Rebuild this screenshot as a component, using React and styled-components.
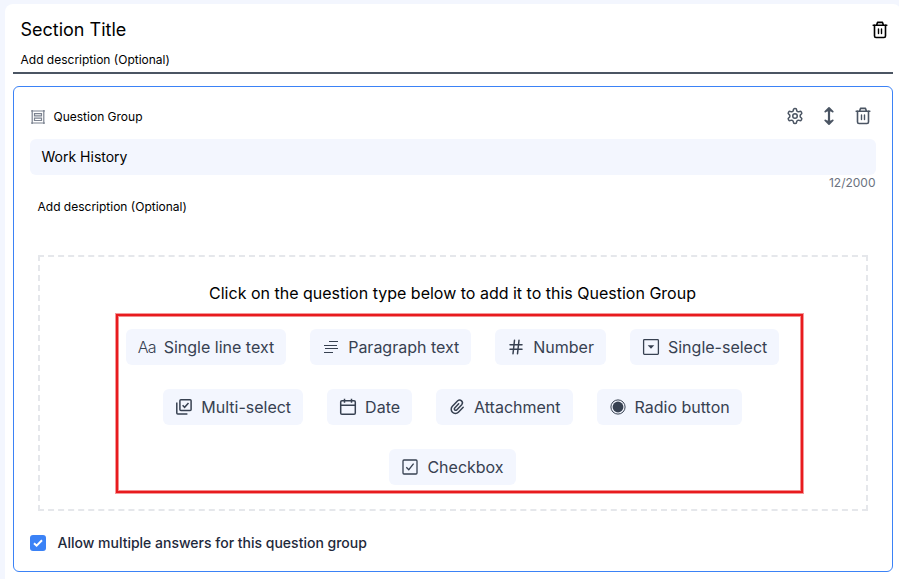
import React from "react";
import styled, { createGlobalStyle } from "styled-components";
import { LuHash, LuSettings } from "react-icons/lu";

const GlobalStyle = createGlobalStyle`
  * {
    box-sizing: border-box;
  }
  body {
    margin: 0;
    background: #f3f6fe;
    font-family: Inter, "Liberation Sans", sans-serif;
    color: #000;
    overflow: hidden;
  }
  svg {
    display: block;
    flex: none;
  }
`;

const Page = styled.div`
  width: 899px;
  height: 579px;
  padding: 4px 0 0 5px;
  overflow: hidden;
`;

const Section = styled.section`
  width: 896px;
  height: 600px;
  padding: 0 8px;
  background: #fff;
  border-radius: 8px;
`;

const SectionHeader = styled.header`
  display: flex;
  justify-content: space-between;
  height: 70px;
  padding: 15px 4px 0 7.5px;
  border-bottom: 2px solid #4b5563;
`;

const SectionTitle = styled.div`
  font-size: 18px;
  line-height: 22px;
`;

const Description = styled.div`
  font-size: 12px;
  line-height: 16px;
  margin-top: ${(props) => props.$top}px;
  padding-left: ${(props) => props.$indent || 0}px;
`;

const IconButton = styled.button`
  display: flex;
  align-items: center;
  justify-content: center;
  width: 18px;
  height: 22px;
  padding: 0;
  border: 0;
  background: none;
  color: ${(props) => props.$color || "#4b5563"};
  cursor: pointer;
`;

const GroupCard = styled.div`
  height: 486px;
  margin-top: 12px;
  padding: 18px 16px 0;
  border: 1px solid #3b82f6;
  border-radius: 6px;
`;

const GroupHeader = styled.div`
  display: flex;
  align-items: flex-start;
  justify-content: space-between;
  height: 23px;
  padding-right: 4px;
`;

const GroupLabel = styled.div`
  display: flex;
  align-items: center;
  gap: 7.5px;
  height: 23px;
  font-size: 12px;
`;

const Actions = styled.div`
  display: flex;
  gap: 16px;
`;

const TitleInput = styled.div`
  height: 36px;
  margin-top: 11px;
  padding: 0 11.5px;
  background: #f3f6fe;
  border-radius: 6px;
  font-size: 14px;
  line-height: 36px;
`;

const Counter = styled.div`
  height: 16px;
  padding-right: 0.5px;
  font-size: 12px;
  line-height: 16px;
  text-align: right;
  color: #6b7280;
`;

const DropZone = styled.div`
  position: relative;
  height: 256px;
  margin: 40px 8px 0;
  padding-top: 24px;
  border: 2px dashed #e5e7eb;
`;

const Hint = styled.div`
  height: 24px;
  padding-right: 1px;
  font-size: 16px;
  line-height: 24px;
  text-align: center;
`;

const Highlight = styled.div`
  position: absolute;
  top: 57px;
  left: 76px;
  width: 687px;
  height: 179px;
  border: 2px solid #e81b1e;
  box-shadow: 0 0 0 1px rgba(232, 27, 30, 0.45), inset 0 0 0 1px rgba(232, 27, 30, 0.5);
  pointer-events: none;
`;

const Rows = styled.div`
  display: flex;
  flex-direction: column;
  gap: 24px;
  margin-top: 24px;
  padding-right: 1px;
`;

const Row = styled.div`
  display: flex;
  justify-content: center;
  gap: 24px;
`;

const Chip = styled.button`
  display: flex;
  align-items: center;
  gap: 8px;
  height: 36px;
  padding: 0 12px;
  border: 0;
  border-radius: 6px;
  background: #f3f6fe;
  color: #374151;
  font-family: inherit;
  font-size: 16px;
  white-space: nowrap;
  cursor: pointer;
`;

const TextGlyph = styled.span`
  width: 18px;
  font-size: 16px;
  font-weight: 300;
  letter-spacing: -0.7px;
`;

const MultipleAnswers = styled.label`
  display: flex;
  align-items: center;
  gap: 11.5px;
  height: 20px;
  margin-top: 22px;
  font-size: 14px;
  font-weight: 500;
  line-height: 18px;
  color: #1e293b;
`;

const AnswersText = styled.span`
  padding-bottom: 1px;
`;

const CheckMark = styled.span`
  display: flex;
  align-items: center;
  justify-content: center;
  width: 16px;
  height: 16px;
  border-radius: 3px;
  background: #3b82f6;
`;

const Svg = ({ size = 18, children }) => (
  <svg
    width={size}
    height={size}
    viewBox={`0 0 ${size} ${size}`}
    fill="none"
    stroke="currentColor"
    strokeWidth="1.3"
  >
    {children}
  </svg>
);

const TrashIcon = () => (
  <svg width="18" height="18" viewBox="0 0 18 18" fill="none" stroke="currentColor" strokeWidth="1.6" strokeLinecap="round" strokeLinejoin="round">
    <path d="M2.2 4.2h13.6M5.6 4l.9-2.6h5l.9 2.6" />
    <path d="M3.5 4.4v10.6q0 1.5 1.5 1.5h8q1.5 0 1.5-1.5V4.4" />
    <path d="M7.5 8v4.5M10.5 8v4.5" strokeWidth="1.4" />
  </svg>
);

const MoveIcon = () => (
  <svg width="18" height="18" viewBox="0 0 18 18" fill="none" stroke="currentColor" strokeLinecap="round" strokeLinejoin="round">
    <path d="M9 2v14" strokeWidth="2.2" />
    <path d="M5.3 4.6L9 1l3.7 3.6M5.3 13.4L9 17l3.7-3.6" fill="currentColor" strokeWidth="1.8" />
  </svg>
);

const GroupIcon = () => (
  <svg width="16" height="16" viewBox="0 0 16 16" fill="none" stroke="#7b828f" strokeWidth="1.2">
    <path d="M2.2 1v14M13.8 1v14M1 2h14M1 14h14" />
    <path d="M4.5 4.6h7v2.3h-7zM4.5 9.2h7v2.3h-7z" />
  </svg>
);

const ParagraphIcon = () => (
  <Svg>
    <path d="M7 3.5h9M2 7.5h13" strokeWidth="1" />
    <path d="M3 10.5h13M2 14.5h9" strokeWidth="1" />
  </Svg>
);

const SelectIcon = () => (
  <Svg>
    <rect x="1.6" y="1.6" width="14.8" height="14.8" rx="0.8" />
    <path d="M5.7 7.2h6.6L9 10.8z" fill="currentColor" stroke="none" />
  </Svg>
);

const MultiSelectIcon = () => (
  <Svg>
    <rect x="4.9" y="1.7" width="11.2" height="10.8" rx="1" strokeWidth="1.5" />
    <path d="M1.8 4.6v10.3q0 1 1 1h9.6" strokeWidth="1.5" />
    <path d="M7.6 7.2l2 2.1 3.9-4.4" strokeWidth="1.5" />
  </Svg>
);

const DateIcon = () => (
  <Svg>
    <rect x="1.7" y="2.7" width="14.6" height="13.6" rx="1.3" strokeWidth="1.5" />
    <path d="M1.7 7.3h14.6M5.5 0.8v4M12.5 0.8v4" strokeWidth="1.5" />
  </Svg>
);

const AttachmentIcon = () => (
  <svg width="18" height="18" viewBox="0 0 18 18" fill="none" stroke="currentColor" strokeWidth="1.5" strokeLinecap="round">
    <path d="M10.7 5.8l-4 4.2a1.35 1.35 0 0 0 2 1.9l5-5.2a2.8 2.8 0 0 0-4-3.9l-5.3 5.5a4.2 4.2 0 0 0 6 5.9l4.8-4.9" />
  </svg>
);

const RadioIcon = () => (
  <Svg>
    <circle cx="9" cy="9" r="7.1" strokeWidth="1" />
    <circle cx="9" cy="9" r="5.4" fill="currentColor" stroke="none" />
  </Svg>
);

const CheckboxIcon = () => (
  <Svg>
    <rect x="2" y="2" width="14" height="14" rx="1" />
    <path d="M5.3 9.2l2.5 2.5 4.8-6" />
  </Svg>
);

const rows = [
  [
    { label: "Single line text", icon: <TextGlyph>Aa</TextGlyph> },
    { label: "Paragraph text", icon: <ParagraphIcon /> },
    { label: "Number", icon: <LuHash size={18} /> },
    { label: "Single-select", icon: <SelectIcon /> },
  ],
  [
    { label: "Multi-select", icon: <MultiSelectIcon /> },
    { label: "Date", icon: <DateIcon /> },
    { label: "Attachment", icon: <AttachmentIcon /> },
    { label: "Radio button", icon: <RadioIcon /> },
  ],
  [{ label: "Checkbox", icon: <CheckboxIcon /> }],
];

export default function App() {
  return (
    <Page>
      <GlobalStyle />
      <Section>
        <SectionHeader>
          <div>
            <SectionTitle>Section Title</SectionTitle>
            <Description $top={11}>Add description (Optional)</Description>
          </div>
          <IconButton $color="#000">
            <TrashIcon />
          </IconButton>
        </SectionHeader>
        <GroupCard>
          <GroupHeader>
            <GroupLabel>
              <GroupIcon />
              Question Group
            </GroupLabel>
            <Actions>
              <IconButton>
                <LuSettings size={18} />
              </IconButton>
              <IconButton>
                <MoveIcon />
              </IconButton>
              <IconButton>
                <TrashIcon />
              </IconButton>
            </Actions>
          </GroupHeader>
          <TitleInput>Work History</TitleInput>
          <Counter>12/2000</Counter>
          <Description $top={8} $indent={7.5}>Add description (Optional)</Description>
          <DropZone>
            <Hint>Click on the question type below to add it to this Question Group</Hint>
            <Rows>
              {rows.map((row, index) => (
                <Row key={index}>
                  {row.map((item) => (
                    <Chip key={item.label}>
                      {item.icon}
                      {item.label}
                    </Chip>
                  ))}
                </Row>
              ))}
            </Rows>
            <Highlight />
          </DropZone>
          <MultipleAnswers>
            <CheckMark>
              <svg width="12" height="12" viewBox="0 0 12 12" fill="none" stroke="#fff" strokeWidth="2">
                <path d="M2 6.2l2.6 2.5L10 3.3" />
              </svg>
            </CheckMark>
            <AnswersText>Allow multiple answers for this question group</AnswersText>
          </MultipleAnswers>
        </GroupCard>
      </Section>
    </Page>
  );
}
